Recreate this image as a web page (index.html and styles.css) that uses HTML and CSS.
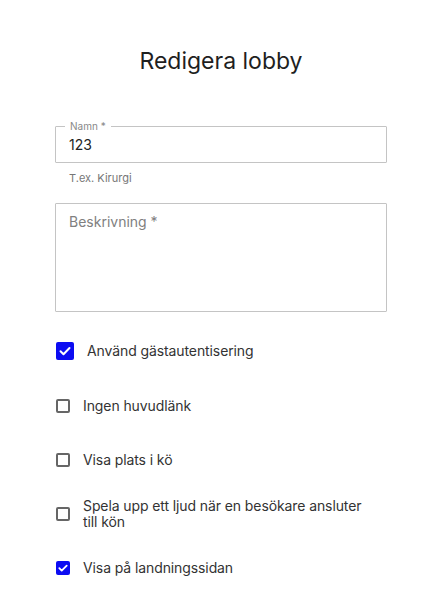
FILE: index.html
```html
<!DOCTYPE html>
<html lang="sv">
<head>
  <meta charset="UTF-8">
  <meta name="viewport" content="width=device-width, initial-scale=1.0">
  <title>Redigera lobby</title>
  <link rel="stylesheet" href="styles.css">
</head>
<body>
  <div class="dialog">
    <h1>Redigera lobby</h1>

    <fieldset class="field">
      <legend>Namn *</legend>
      <input type="text" value="123">
    </fieldset>
    <p class="helper">T.ex. Kirurgi</p>

    <textarea class="area" placeholder="Beskrivning *"></textarea>

    <div class="options">
      <label class="option option-big">
        <span class="box checked">
          <svg viewBox="0 0 18 18" width="18" height="18"><path d="M4.5 9.2l3 3 6-6.2" fill="none" stroke="#fff" stroke-width="2" stroke-linecap="round" stroke-linejoin="round"/></svg>
        </span>
        <span>Använd gästautentisering</span>
      </label>
      <label class="option">
        <span class="box"></span>
        <span>Ingen huvudlänk</span>
      </label>
      <label class="option">
        <span class="box"></span>
        <span>Visa plats i kö</span>
      </label>
      <label class="option">
        <span class="box"></span>
        <span>Spela upp ett ljud när en besökare ansluter<br>till kön</span>
      </label>
      <label class="option">
        <span class="box checked">
          <svg viewBox="0 0 14 14" width="14" height="14"><path d="M3.3 7.2l2.4 2.4 5-5" fill="none" stroke="#fff" stroke-width="1.8" stroke-linecap="round" stroke-linejoin="round"/></svg>
        </span>
        <span>Visa på landningssidan</span>
      </label>
    </div>
  </div>
</body>
</html>
```

FILE: styles.css
```css
body {
  margin: 0;
  background: #ffffff;
  font-family: Inter, "Noto Sans", sans-serif;
  color: #222;
}
.dialog {
  padding: 44px 56px 0 55px;
}
h1 {
  margin: 0 0 43px;
  text-align: center;
  font-size: 23px;
  font-weight: 400;
  line-height: 34px;
  color: #1f1f1f;
}
.field {
  margin: 0;
  padding: 0 13px 8px 9px;
  border: 1px solid #c4c4c4;
  border-radius: 1px;
  height: 32px;
}
.field legend {
  padding: 0 5px;
  font-size: 10px;
  line-height: 10px;
  color: #888;
}
.field input {
  border: none;
  outline: none;
  padding: 0 0 0 4px;
  margin: 5px 0 0;
  width: 100%;
  font-family: inherit;
  font-size: 14px;
  color: #222;
  background: transparent;
}
.helper {
  margin: 8px 0 0 14px;
  font-size: 11px;
  line-height: 14px;
  color: #777;
}
.area {
  display: block;
  box-sizing: border-box;
  width: 100%;
  height: 109px;
  margin-top: 18px;
  padding: 8px 13px;
  border: 1px solid #c4c4c4;
  border-radius: 1px;
  resize: none;
  font-family: inherit;
  font-size: 14px;
  line-height: 20px;
}
.area::placeholder {
  color: #808080;
}
.options {
  display: flex;
  flex-direction: column;
  margin-top: 11px;
}
.option {
  display: flex;
  align-items: center;
  gap: 13px;
  height: 54px;
  font-size: 14px;
  line-height: 16px;
  letter-spacing: -0.1px;
  color: #333;
}
.option-big {
  height: 56px;
}
.box {
  flex: none;
  box-sizing: border-box;
  width: 14px;
  height: 14px;
  margin-left: 1px;
  border: 2px solid #666;
  border-radius: 2px;
  display: flex;
  align-items: center;
  justify-content: center;
}
.box.checked {
  border: none;
  background: #0c0cf2;
}
.option-big .box {
  width: 18px;
  height: 18px;
}
```
